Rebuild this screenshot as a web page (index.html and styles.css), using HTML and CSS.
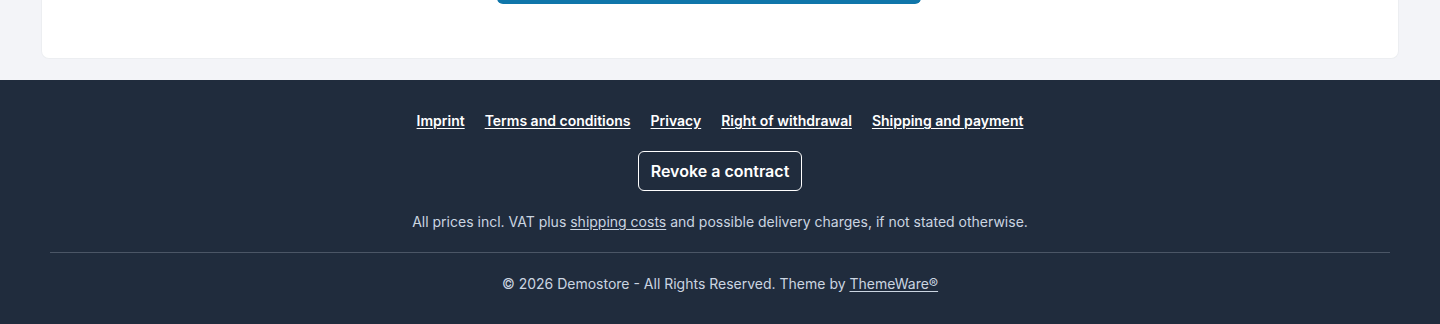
FILE: index.html
```html
<!DOCTYPE html>
<html lang="en">
<head>
<meta charset="utf-8">
<title>Footer</title>
<link rel="stylesheet" href="styles.css">
</head>
<body>
<main class="page">
  <section class="card">
    <div class="card-action">
      <a class="primary-btn" href="#" aria-label="Continue"></a>
    </div>
  </section>
</main>
<footer class="footer">
  <nav class="footer-links">
    <a href="#">Imprint</a>
    <a href="#">Terms and conditions</a>
    <a href="#">Privacy</a>
    <a href="#">Right of withdrawal</a>
    <a href="#">Shipping and payment</a>
  </nav>
  <div class="revoke-wrap">
    <a class="revoke-btn" href="#">Revoke a contract</a>
  </div>
  <p class="vat">All prices incl. VAT plus <a href="#">shipping costs</a> and possible delivery charges, if not stated otherwise.</p>
  <div class="footer-bottom">
    <p class="copyright">© 2026 Demostore - All Rights Reserved. Theme by <a href="#">ThemeWare®</a></p>
  </div>
</footer>
</body>
</html>
```
FILE: styles.css
```css
* { box-sizing: border-box; }
html, body { margin: 0; padding: 0; }
body {
  background: #f3f4f8;
  font-family: Inter, "Noto Sans", sans-serif;
  overflow: hidden;
}
.page {
  padding: 0 41px 21px;
}
.card {
  background: #fff;
  border: 1px solid #eceef1;
  border-top: none;
  border-radius: 0 0 8px 8px;
  height: 59px;
  overflow: hidden;
}
.card-action {
  display: flex;
  padding-left: 455px;
}
.primary-btn {
  display: block;
  width: 424px;
  height: 44px;
  margin-top: -40px;
  background: #0f76aa;
  border-radius: 6px;
  text-decoration: none;
}
.footer {
  background: #202c3d;
  padding: 32px 50px 0;
  height: 244px;
  color: #cbd5e1;
}
.footer-links {
  display: flex;
  justify-content: center;
  gap: 20px;
}
.footer-links a {
  color: #fff;
  font-weight: 600;
  font-size: 14px;
  line-height: 18px;
  text-decoration: underline;
  text-underline-offset: 2px;
}
.revoke-wrap {
  display: flex;
  justify-content: center;
  margin-top: 21px;
}
.revoke-btn {
  display: block;
  border: 1px solid #fff;
  border-radius: 6px;
  height: 40px;
  padding: 0 12px;
  line-height: 38px;
  color: #fff;
  font-weight: 600;
  font-size: 16px;
  text-decoration: none;
}
.vat {
  margin: 21px 0 0;
  text-align: center;
  font-size: 14px;
  line-height: 20px;
  color: #cbd5e1;
}
.vat a, .copyright a {
  color: #cbd5e1;
  text-decoration: underline;
  text-underline-offset: 2px;
}
.footer-bottom {
  margin-top: 20px;
  border-top: 1px solid #4b5666;
  padding-top: 21px;
}
.copyright {
  margin: 0;
  text-align: center;
  font-size: 14px;
  line-height: 20px;
  color: #cbd5e1;
}
```
